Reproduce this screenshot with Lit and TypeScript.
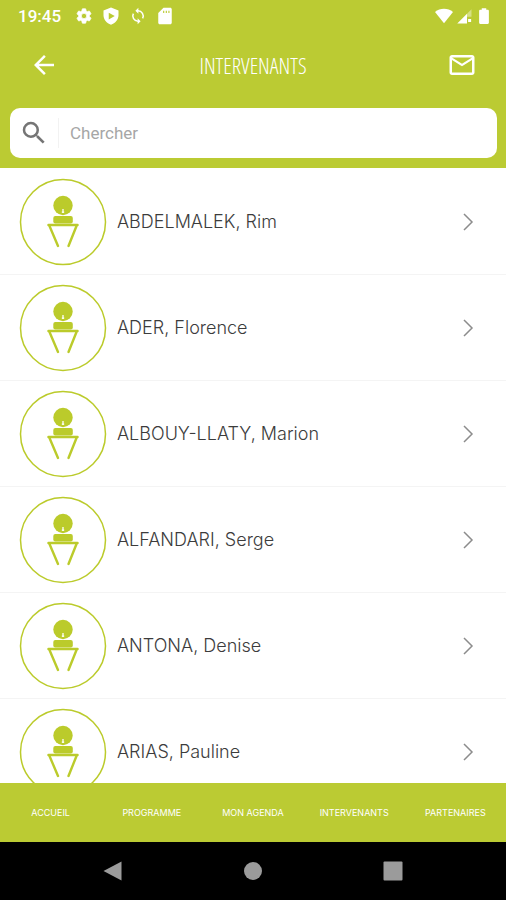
import { LitElement, html, css, svg } from "lit";
import { customElement } from "lit/decorators.js";

const SPEAKERS = [
  "ABDELMALEK, Rim",
  "ADER, Florence",
  "ALBOUY-LLATY, Marion",
  "ALFANDARI, Serge",
  "ANTONA, Denise",
  "ARIAS, Pauline",
];

const TABS = ["ACCUEIL", "PROGRAMME", "MON AGENDA", "INTERVENANTS", "PARTENAIRES"];

const ICONS = {
  gear: svg`<path d="M19.14 12.94c.04-.3.06-.61.06-.94s-.02-.64-.07-.94l2.03-1.58c.18-.14.23-.41.12-.61l-1.92-3.32c-.12-.22-.37-.29-.59-.22l-2.39.96c-.5-.38-1.03-.7-1.62-.94l-.36-2.54C14.36 2.57 14.15 2.4 13.9 2.4h-3.8c-.25 0-.46.17-.5.41l-.36 2.54c-.59.24-1.13.57-1.62.94l-2.39-.96c-.22-.08-.47 0-.59.22L2.73 8.87c-.12.21-.08.47.12.61l2.03 1.58c-.05.3-.09.63-.09.94s.02.64.07.94l-2.03 1.58c-.18.14-.23.41-.12.61l1.92 3.32c.12.22.37.29.59.22l2.39-.96c.5.38 1.03.7 1.62.94l.36 2.54c.05.24.26.41.51.41h3.8c.25 0 .46-.17.5-.41l.36-2.54c.59-.24 1.13-.56 1.62-.94l2.39.96c.22.08.47 0 .59-.22l1.92-3.32c.12-.22.07-.47-.12-.61zM12 15.6a3.6 3.6 0 1 1 0-7.2 3.6 3.6 0 0 1 0 7.2z" stroke="currentColor"/>`,
  shield: svg`<path fill-rule="evenodd" d="M12 .5 2 4.500V11c0 5.600 4.200 10.900 10 12.500 5.800-1.600 10-6.900 10-12.500V4.500zM9 7.500l8 4.500-8 4.500z"/>`,
  sync: svg`<g fill="none" stroke="currentColor" stroke-width="2"><path d="M12 5a7 7 0 0 1 6.200 10.200"/><path d="M12 19A7 7 0 0 1 5.800 8.800"/></g><path d="M12.500 1v8l-4-4zM11.500 15v8l4-4z"/>`,
  card: svg`<path fill-rule="evenodd" d="M19 1h-9L3 8v13c0 1.100.9 2 2 2h14c1.100 0 2-.9 2-2V3c0-1.100-.9-2-2-2zM9.500 5h1.500v3H9.500zm3.500 0h1.500v3H13zm3.500 0H18v3h-1.500z"/>`,
  wifi: svg`<path d="M12 21.500 24 6.500C20.500 3.800 16.500 2.300 12 2.300S3.500 3.800 0 6.500z"/>`,
  signal: svg`<path opacity=".4" d="M22 3v10h-6V9z"/><path d="M3 22 16 9v13z"/><path d="M17.500 16h4v4h-4z"/>`,
  battery: svg`<path d="M17 3.500h-2V1.500H9v2H7c-.8 0-1.500.7-1.500 1.500v16c0 .8.7 1.500 1.500 1.500h10c.8 0 1.500-.7 1.500-1.500V5c0-.8-.7-1.500-1.500-1.500z"/>`,
  back: svg`<path d="M20 11H7.830l5.590-5.590L12 4l-8 8 8 8 1.410-1.410L7.830 13H20z"/>`,
  mail: svg`<path d="M20 4H4c-1.100 0-2 .9-2 2v12c0 1.100.9 2 2 2h16c1.100 0 2-.9 2-2V6c0-1.100-.9-2-2-2zm0 14H4V8l8 5 8-5zm-8-7L4 6h16z"/>`,
  search: svg`<path d="M15.500 14h-.79l-.28-.27A6.470 6.470 0 0 0 16 9.500 6.500 6.500 0 1 0 9.500 16c1.610 0 3.090-.59 4.230-1.570l.27.28v.79l5 4.990L20.490 19zm-6 0a4.500 4.500 0 1 1 0-9 4.500 4.500 0 0 1 0 9z"/>`,
  navBack: svg`<path d="M20.500 2.500v19L2.500 12z"/>`,
  navHome: svg`<circle cx="12" cy="12" r="9"/>`,
  navRecent: svg`<rect x="2.500" y="2.500" width="19" height="19" rx="1"/>`,
};

const icon = (name: keyof typeof ICONS, cls = "") =>
  html`<svg class="icon ${cls}" viewBox="0 0 24 24" aria-hidden="true">${ICONS[name]}</svg>`;

@customElement("speaker-row")
class SpeakerRow extends LitElement {
  static properties = { name: {} };
  declare name: string;

  static styles = css`
    :host { display: block; }
    .row {
      display: flex;
      align-items: center;
      gap: 10px;
      box-sizing: border-box;
      height: 106px;
      padding: 0 26px 0 19px;
      border-bottom: 1px solid #f4f4f4;
      color: #3c3c3c;
      text-decoration: none;
      font: 300 18px/24px Inter, sans-serif;
    }
    .avatar { width: 88px; height: 88px; flex: none; }
    .name { flex: 1; min-width: 0; }
    .chevron { width: 24px; height: 24px; flex: none; }
  `;

  render() {
    return html`
      <a class="row" href="#">
        <svg class="avatar" viewBox="0 0 88 88" aria-hidden="true" fill="none" stroke="#bbcb2b">
          <circle cx="44" cy="44" r="42.500" stroke-width="1.500" />
          <circle cx="44" cy="27.500" r="9.700" fill="#bbcb2b" stroke="none" />
          <path d="M44 31v4M42.800 34.200h2.400" stroke="#fff" stroke-width="1.300" />
          <rect x="34.300" y="38" width="19.500" height="7.500" rx="2" fill="#bbcb2b" stroke="none" />
          <path d="M29.500 47h29" stroke-width="2.500" stroke-linecap="round" />
          <path d="M30.500 48l8.500 20M57.500 48l-8 20" stroke-width="2.400" stroke-linecap="round" />
        </svg>
        <span class="name">${this.name}</span>
        <svg class="chevron" viewBox="0 0 24 24" aria-hidden="true">
          <path d="M8 4l8 8-8 8" fill="none" stroke="#8c8c8c" stroke-width="1.500" />
        </svg>
      </a>
    `;
  }
}

@customElement("app-root")
class AppRoot extends LitElement {
  static styles = css`
    :host {
      display: flex;
      flex-direction: column;
      height: 100vh;
      background: #fff;
      font-family: Inter, sans-serif;
    }
    .icon { display: block; width: 18px; height: 18px; fill: currentColor; flex: none; }
    .large { width: 30px; height: 30px; }
    button {
      display: grid;
      place-items: center;
      padding: 0;
      border: 0;
      background: none;
      color: inherit;
    }
    .header { background: #bbcb33; color: #fff; padding-bottom: 10px; flex: none; }
    .status {
      display: flex;
      align-items: center;
      justify-content: space-between;
      height: 32px;
      padding: 0 13px 0 18px;
    }
    .group { display: flex; align-items: center; gap: 9px; }
    .right { gap: 2px; }
    .time { font: 500 17px/24px Roboto, sans-serif; margin-right: 5px; }
    .bar {
      display: flex;
      align-items: center;
      justify-content: space-between;
      height: 66px;
      padding: 0 24px;
    }
    .action { width: 40px; height: 40px; }
    .title {
      margin: 0;
      font: 300 22px/24px "Open Sans Condensed Light", "Roboto Condensed Light", "Open Sans Condensed", sans-serif;
    }
    .search {
      display: flex;
      align-items: center;
      height: 50px;
      margin: 10px 9px 0 10px;
      border-radius: 10px;
      background: #fff;
      color: #757575;
    }
    .lens { padding: 0 9px; border-right: 1px solid #f2f2f2; }
    .field {
      flex: 1;
      min-width: 0;
      padding: 0 11px;
      border: 0;
      outline: 0;
      background: none;
      color: #444;
      font: 400 17px/26px Roboto, sans-serif;
    }
    .field::placeholder { color: #a6a6a6; opacity: 1; }
    .list {
      flex: 1;
      min-height: 0;
      margin: 0;
      padding: 1px 0 0;
      list-style: none;
      overflow-y: auto;
      scrollbar-width: none;
    }
    .tabs {
      display: grid;
      grid-template-columns: repeat(5, 1fr);
      align-items: center;
      height: 59px;
      flex: none;
      background: #bbcb33;
    }
    .tab {
      color: #fff;
      text-align: center;
      text-decoration: none;
      white-space: nowrap;
      font-size: 9px;
      line-height: 12px;
    }
    .system {
      display: flex;
      align-items: center;
      justify-content: center;
      gap: 100px;
      height: 58px;
      flex: none;
      background: #000;
      color: #9b9b9b;
    }
    .key { width: 24px; height: 24px; }
    .soft { width: 40px; height: 40px; }
  `;

  render() {
    return html`
      <header class="header">
        <div class="status">
          <div class="group">
            <span class="time">19:45</span>
            ${icon("gear")}${icon("shield")}${icon("sync")}${icon("card")}
          </div>
          <div class="group right">${icon("wifi")}${icon("signal")}${icon("battery")}</div>
        </div>
        <div class="bar">
          <button class="action" aria-label="Retour">${icon("back", "large")}</button>
          <h1 class="title">INTERVENANTS</h1>
          <button class="action" aria-label="Messages">${icon("mail", "large")}</button>
        </div>
        <div class="search">
          <label class="lens" for="query" aria-label="Chercher">${icon("search", "large")}</label>
          <input class="field" id="query" type="text" placeholder="Chercher" />
        </div>
      </header>
      <ul class="list">
        ${SPEAKERS.map((name) => html`<li><speaker-row .name=${name}></speaker-row></li>`)}
      </ul>
      <nav class="tabs">${TABS.map((tab) => html`<a class="tab" href="#">${tab}</a>`)}</nav>
      <div class="system">
        <button class="soft" aria-label="Précédent">${icon("navBack", "key")}</button>
        <button class="soft" aria-label="Accueil">${icon("navHome", "key")}</button>
        <button class="soft" aria-label="Applications">${icon("navRecent", "key")}</button>
      </div>
    `;
  }
}
